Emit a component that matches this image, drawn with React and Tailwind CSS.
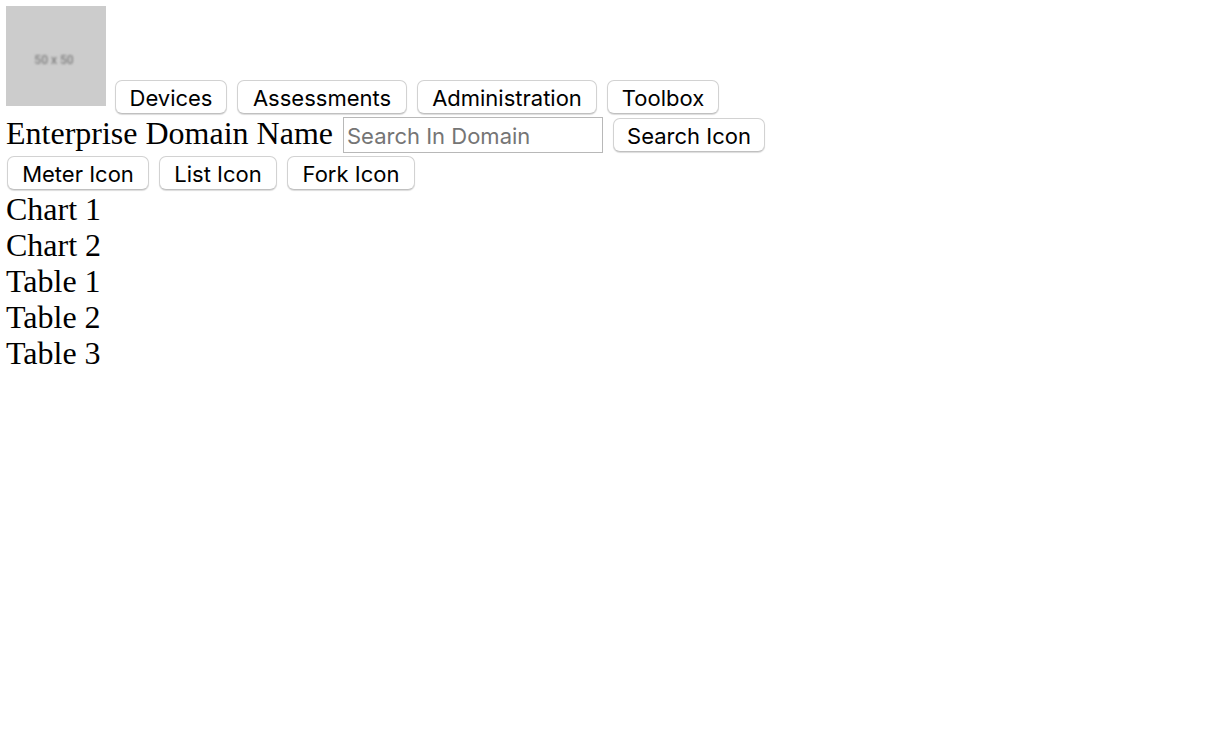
const buttonClass =
  'h-[34px] shrink-0 rounded-[7px] border border-[#d2d2d2] border-b-[#c0c0c0] bg-white pt-0.5 text-center font-["Inter",sans-serif] text-[22px] leading-7 whitespace-nowrap text-black shadow-[0_1px_1px_rgba(0,0,0,0.14)]';

function Button({ width, children }) {
  return (
    <button type="button" className={`${buttonClass} ${width}`}>
      {children}
    </button>
  );
}

export default function App() {
  return (
    <div className='min-h-screen bg-white p-1.5 font-["Liberation_Serif",serif] text-[32px] leading-9 text-black'>
      <header className="flex flex-wrap items-end gap-[9px]">
        <div className="mb-2 flex size-[100px] items-center justify-center bg-[#cccccc] pt-2 pr-1 font-['Roboto',sans-serif] text-xs leading-4 font-medium text-[#808080]">
          <span className="blur-[1px]">50 x 50</span>
        </div>
        <nav className="flex flex-wrap gap-2.5">
          <Button width="w-28">Devices</Button>
          <Button width="w-[170px]">Assessments</Button>
          <Button width="w-[180px]">Administration</Button>
          <Button width="w-28">Toolbox</Button>
        </nav>
      </header>
      <form className="mt-[3px] flex flex-wrap items-center gap-2.5" onSubmit={(e) => e.preventDefault()}>
        <label htmlFor="domain-search" className="self-start leading-8">
          Enterprise Domain Name
        </label>
        <input
          id="domain-search"
          type="text"
          placeholder="Search In Domain"
          className='h-9 w-[260px] border border-[#b8b8b8] px-[3px] pt-0.5 font-["Inter",sans-serif] text-[22px] leading-7 placeholder:text-[#757575]'
        />
        <Button width="w-[152px]">Search Icon</Button>
      </form>
      <div className="mt-[3px] mb-px flex flex-wrap gap-2.5 pl-px">
        <Button width="w-[142px]">Meter Icon</Button>
        <Button width="w-[118px]">List Icon</Button>
        <Button width="w-32">Fork Icon</Button>
      </div>
      <main>
        <div>Chart 1</div>
        <div>Chart 2</div>
        <div>Table 1</div>
        <div>Table 2</div>
        <div>Table 3</div>
      </main>
    </div>
  );
}
